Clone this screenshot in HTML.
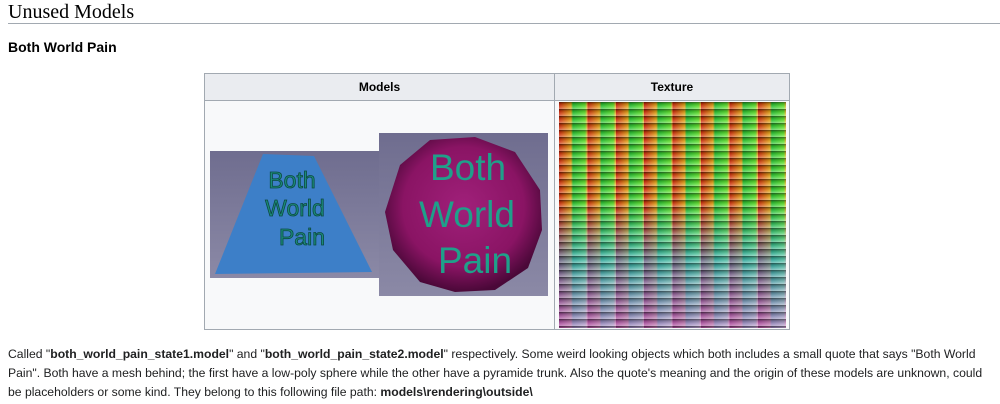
<!DOCTYPE html>
<html><head><meta charset="utf-8"><style>
body{margin:0;background:#fff;width:1000px;height:404px;overflow:hidden;position:relative;font-family:"Liberation Sans",Arial,sans-serif;color:#202122}
.h2{position:absolute;left:8px;top:1px;font-family:"Liberation Serif",Georgia,serif;font-size:20px;color:#000}
.line{position:absolute;left:8px;top:23px;width:992px;height:1px;background:#a2a9b1}
.h3{position:absolute;left:8px;top:39px;font-size:14px;font-weight:bold;color:#000}
.tbl{position:absolute;left:204px;top:73px;width:586px;height:257px;border:1px solid #a2a9b1;background:#f8f9fa;box-sizing:border-box}
.hd{position:absolute;top:0;height:26px;background:#eaecf0;border-bottom:1px solid #a2a9b1;font-size:12px;font-weight:bold;text-align:center;line-height:26px;color:#000}
.vl{position:absolute;left:349px;top:0;width:1px;height:100%;background:#a2a9b1}
.tex{position:absolute;left:559px;top:102px;width:227px;height:226px;
background:
repeating-linear-gradient(to right,rgba(0,0,0,.15) 0,rgba(255,255,255,.15) 28.4px),
repeating-linear-gradient(to bottom,rgba(0,0,0,.6) 0,rgba(0,0,0,.2) 2px,rgba(255,255,255,.2) 5px,rgba(255,255,255,.45) 7px),
linear-gradient(to bottom,rgba(0,0,0,0) 0,rgba(0,0,0,0) 45%,rgba(40,160,255,.6) 70%,rgba(200,100,255,.75) 100%),
repeating-linear-gradient(to right,#ff3010 0,#ffb000 12px,#10d020 14px,#40e000 26px,#ffa000 28.4px);}
.p{position:absolute;left:8px;top:345px;width:990px;font-size:12.2px;line-height:19px;color:#202122}
</style></head><body>
<div class="h2">Unused Models</div><div class="line"></div>
<div class="h3">Both World Pain</div>
<div class="tbl">
<div class="hd" style="left:0;width:349px">Models</div>
<div class="hd" style="left:350px;width:234px">Texture</div>
<div class="vl"></div>
</div>
<div class="tex"></div>
<svg style="position:absolute;left:0;top:0" width="1000" height="404">
<defs><radialGradient id="g" cx="50%" cy="45%" r="55%"><stop offset="0" stop-color="#a0207a"/><stop offset=".7" stop-color="#8a1464"/><stop offset="1" stop-color="#4a0838"/></radialGradient>
<linearGradient id="bg" x1="0" y1="0" x2="0" y2="1"><stop offset="0" stop-color="#6f6d8f"/><stop offset="1" stop-color="#8b89a6"/></linearGradient></defs>
<rect x="210" y="151" width="169" height="127" fill="url(#bg)"/>
<polygon points="263,154 314,156 372,272 215,274" fill="#3d7fc8"/>
<g font-family="Liberation Sans,sans-serif" font-size="23" fill="#1a8a7a" stroke="#0d4a40" stroke-width=".8" text-anchor="middle">
<text x="292" y="188">Both</text><text x="295" y="216">World</text><text x="302" y="245">Pain</text></g>
<rect x="379" y="133" width="169" height="163" fill="url(#bg)"/>
<polygon points="400,165 430,140 475,137 515,152 540,190 542,230 528,268 495,290 455,292 420,282 393,250 385,212" fill="url(#g)"/>
<g font-family="Liberation Sans,sans-serif" font-size="37" fill="#1fa08a" text-anchor="middle">
<text x="468" y="180">Both</text><text x="467" y="227">World</text><text x="475" y="273">Pain</text></g>
</svg>
<div class="p">Called "<b>both_world_pain_state1.model</b>" and "<b>both_world_pain_state2.model</b>" respectively. Some weird looking objects which both includes a small quote that says "Both World Pain". Both have a mesh behind; the first have a low-poly sphere while the other have a pyramide trunk. Also the quote's meaning and the origin of these models are unknown, could be placeholders or some kind. They belong to this following file path: <b>models\rendering\outside\</b></div>
</body></html>
